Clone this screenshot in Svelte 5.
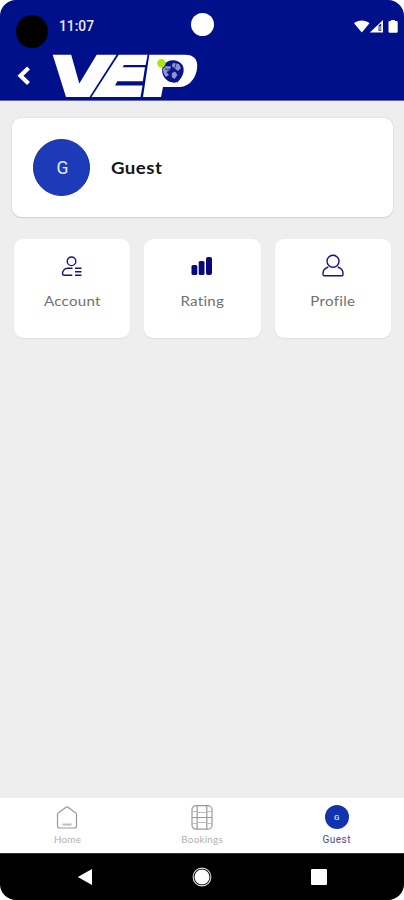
<script>
  const tiles = ['Account', 'Rating', 'Profile'];
</script>

<div class="phone">
  <header>
    <div class="status">
      <span class="lens"></span>
      <span class="time">11:07</span>
      <span class="camera"></span>
      <svg class="signals" width="46" height="16" viewBox="0 0 46 16" fill="#fff">
        <path d="M0 4.2C4 .6 11.500 .6 15.500 4.200L7.800 13.500Z" />
        <path fill-rule="evenodd" d="M15.800 13.500L29 1V13.500ZM24.600 6.500V12H27.200V4.500Z" />
        <path d="M26 7v4.500" stroke="#fff" stroke-width="1" />
        <path d="M37 1h4v1h1.500q1.200 0 1.200 1.200v9.300q0 1.200-1.200 1.200h-6.800q-1.200 0-1.200-1.200V3.200Q34.500 2 35.700 2H37Z" />
      </svg>
    </div>
    <div class="bar">
      <svg class="back" width="14" height="22" viewBox="0 0 14 22"><path d="M12.500 3L4.500 10.800L12.500 18.600" fill="none" stroke="#fff" stroke-width="4.200" /></svg>
      <svg class="logo" width="148" height="46" viewBox="52 53 148 46">
        <path fill="#fff" d="M52.700 54.700H71.200L79.300 83.500L96.700 54.700H116.500L89.500 97H66Z" />
        <path fill="#fff" d="M118.700 54.700H147.600L145.600 65H124L122.600 67.200H145L142.800 81.200H117.300L115 85.600H142.500L140.500 97H91.500Z" />
        <path fill="#fff" d="M149.300 54.700H185C194 54.700 197.700 59.500 197.200 67C196.600 77 190 86.700 180 86.900H163L161 97H143Z" />
        <path fill="#08128b" d="M163.500 65C168 58.500 178 58.500 182.500 65C186 72 181 79 177.500 82L176.500 86.500L173.500 82.500C165 82 159.500 73 163.500 65Z" />
        <g fill="#8d94ca">
          <path d="M162.800 69L166 66L171 66.500L170 70L166.500 72L169 75L166 77L163.800 74Z" />
          <path d="M173 63L179 64L181 68L178 71L174 68L171.500 66Z" />
          <path d="M172 73L175 71.500L177.500 75L174.500 79L171.500 77Z" />
        </g>
        <path d="M169 63l4 5-4 4 3 6M176 64l-2 7 6 2M165 69l9 1" fill="none" stroke="#141e91" stroke-width=".8" />
        <path fill="#fff" d="M173 83.300L176.700 82L178 84.500L175.500 87.200Z" />
        <circle cx="161.400" cy="63.200" r="4.200" fill="#a8e80b" />
      </svg>
    </div>
  </header>

  <main>
    <section class="user">
      <span class="avatar">G</span>
      <strong>Guest</strong>
    </section>
    <div class="tiles">
      {#each tiles as name}
        <section class="tile">
          <svg width="26" height="26" viewBox="0 0 26 26" fill="none" stroke="#17128a" stroke-width="1.400">
            {#if name === 'Account'}
              <circle cx="12.500" cy="8.300" r="4.300" />
              <path d="M13.500 15.300H8.500C5.500 15.300 3.500 18 3.500 20.500Q3.500 22.300 5.500 22.300H13.300M16 15.300h6.500M16 18.800h6.500M16 22.300h6.500" />
            {:else if name === 'Rating'}
              <g fill="#07087e" stroke="none">
                <rect x="2.500" y="12" width="5.800" height="10" rx="1.500" />
                <rect x="9.700" y="8" width="5.800" height="14" rx="1.500" />
                <rect x="17" y="4" width="6" height="18" rx="1.900" />
              </g>
            {:else}
              <circle cx="13" cy="8.300" r="6" />
              <path d="M8.300 14C5.200 15 3 17.500 3 20.500V21.500Q3 22.700 4.200 22.700H21.800Q23 22.700 23 21.500V20.500C23 17.500 20.800 15 17.700 14" />
            {/if}
          </svg>
          <span class="label">{name}</span>
        </section>
      {/each}
    </div>
  </main>

  <nav>
    <div class="tab">
      <svg width="26" height="28" viewBox="0 0 26 28" fill="none" stroke="#999" stroke-width="1.200">
        <path d="M3.500 10.500Q3.500 9.500 4.500 8.800L12 3.200Q13 2.500 14 3.200L21.500 8.800Q22.500 9.500 22.500 10.500V22Q22.500 24 20.500 24H5.500Q3.500 24 3.500 22Z" />
        <path d="M8.500 20.500H17.500" stroke-width="1.800" stroke="#bbb" />
      </svg>
      <span>Home</span>
    </div>
    <div class="tab">
      <svg width="26" height="28" viewBox="0 0 26 28" fill="none" stroke="#999" stroke-width="1.200">
        <rect x="3" y="1.700" width="20" height="23.500" rx="4" />
        <path d="M8.200 1.700V25.200M17.800 1.700V25.200M3 13.500H23" />
        <path d="M3 7.600H8.200M3 19.500H8.200M17.800 7.600H23M17.800 19.500H23M8.200 8.500H17.800M8.200 18.500H17.800" stroke="#bbb" stroke-width="1" />
      </svg>
      <span>Bookings</span>
    </div>
    <div class="tab active">
      <b>G</b>
      <span>Guest</span>
    </div>
  </nav>

  <footer>
    <svg width="16" height="18" viewBox="0 0 16 18"><path d="M.8 9L15 1V17Z" fill="#fff" /></svg>
    <svg width="20" height="20" viewBox="0 0 20 20"><circle cx="10" cy="10" r="8.900" fill="none" stroke="#ddd" stroke-width="1.100" /><circle cx="10" cy="10" r="7.500" fill="#fff" /></svg>
    <svg width="16" height="16" viewBox="0 0 16 16"><rect width="16" height="16" rx="1" fill="#fff" /></svg>
  </footer>
</div>

<style>
  :global(body) { background: #fff; }
  * { box-sizing: border-box; }
  svg { display: block; flex: none; }
  .phone {
    width: 404px; height: 900px; overflow: hidden;
    display: flex; flex-direction: column;
    border-radius: 16px; background: #eee;
    font-family: Roboto, sans-serif;
  }
  header { height: 101px; background: #00108b; border-bottom: 1px solid #62659f; flex: none; }
  .status { height: 53px; display: flex; }
  .lens { width: 32px; height: 33px; margin: 15px 0 0 16px; border-radius: 50%; background: #000; }
  .time { margin: 18px 0 0 11px; width: 37px; font-size: 13.8px; line-height: 17px; font-weight: 500; color: #e9eaf5; white-space: nowrap; }
  .camera { width: 23px; height: 23px; margin: 13px 0 0 95px; border-radius: 50%; background: #fff; }
  .signals { margin: 19px 0 0 140px; }
  .bar { display: flex; }
  .back { margin: 12px 0 0 16px; }
  .logo { margin-left: 22px; }
  main { flex: 1; padding: 17px 11px 0 12px; }
  .user {
    height: 99px; border-radius: 9px; background: #fff;
    display: flex; align-items: center; padding-left: 21px;
    box-shadow: 0 0 2px #ccc, 0 1px 1px #d4d4d4;
  }
  .avatar {
    width: 57px; height: 57px; border-radius: 50%; background: #1d3bb8; border: 1px solid #102baa;
    display: flex; align-items: center; justify-content: center;
    color: #e5e9f8; font-size: 17.5px; padding: 1px 0 0 2px;
  }
  strong { margin-left: 21px; font: 700 17px/24px Lato, sans-serif; letter-spacing: .4px; color: #151515; transform: scaleX(1.1); transform-origin: left; }
  .tiles { display: flex; gap: 14px; padding: 22px 2px 0; }
  .tile {
    flex: 1; height: 99px; border-radius: 9px; background: #fff;
    display: flex; flex-direction: column; align-items: center; padding-top: 14px;
    box-shadow: 0 1px 1px #ddd;
  }
  .label { margin-top: 12px; font: 400 14px/20px Lato, sans-serif; letter-spacing: .25px; color: #707070; white-space: nowrap; transform: scaleX(1.08); }
  nav { height: 55px; background: #fff; display: flex; flex: none; }
  .tab { flex: 1; display: flex; flex-direction: column; align-items: center; padding-top: 6px; color: #b0b0b0; }
  .tab span { font: 400 9px/12px Lato, sans-serif; letter-spacing: .25px; margin-top: 2px; transform: scaleX(1.09); }
  .tab b {
    width: 24px; height: 24px; border-radius: 50%; margin: 1px 0 3px; background: #1232ae;
    color: #dfe5ff; display: flex; align-items: center; justify-content: center; font-size: 8px; font-weight: 500;
  }
  .tab.active span { font: 400 10px/12px Roboto, sans-serif; letter-spacing: .5px; color: #4a4699; transform: none; }
  footer { height: 47px; background: #000; display: flex; align-items: center; padding-left: 77px; border-top: 1px solid #333; flex: none; }
  footer svg:nth-child(2) { margin-left: 99px; }
  footer svg:nth-child(3) { margin-left: 99px; }
</style>
